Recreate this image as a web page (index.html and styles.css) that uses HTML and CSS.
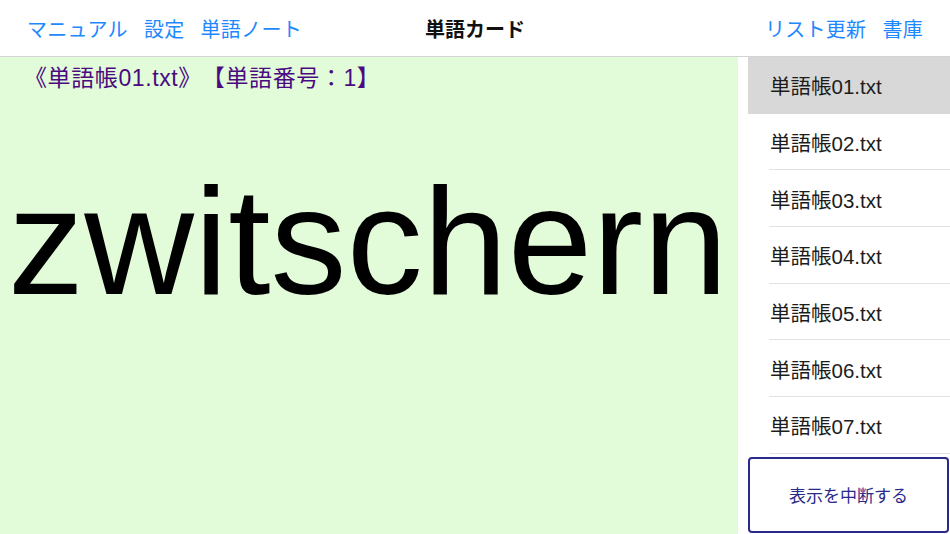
FILE: index.html
```html
<!DOCTYPE html>
<html lang="ja">
<head>
<meta charset="utf-8">
<title>単語カード</title>
<link rel="stylesheet" href="styles.css">
</head>
<body>
<div class="app">
  <header class="navbar">
    <div class="nav-left">
      <span class="nav-link">マニュアル</span>
      <span class="nav-link">設定</span>
      <span class="nav-link">単語ノート</span>
    </div>
    <div class="nav-title">単語カード</div>
    <div class="nav-right">
      <span class="nav-link">リスト更新</span>
      <span class="nav-link">書庫</span>
    </div>
  </header>
  <div class="content">
    <main class="card">
      <div class="info">《単語帳01.txt》【単語番号：1】</div>
      <div class="word">zwitschern</div>
    </main>
    <aside class="sidebar">
      <ul class="file-list">
        <li class="file selected">単語帳01.txt</li>
        <li class="file">単語帳02.txt</li>
        <li class="file">単語帳03.txt</li>
        <li class="file">単語帳04.txt</li>
        <li class="file">単語帳05.txt</li>
        <li class="file">単語帳06.txt</li>
        <li class="file">単語帳07.txt</li>
      </ul>
      <button class="stop-btn">表示を中断する</button>
    </aside>
  </div>
</div>
</body>
</html>
```
FILE: styles.css
```css
* { box-sizing: border-box; }
html, body {
  margin: 0;
  padding: 0;
  width: 950px;
  height: 534px;
  overflow: hidden;
  background: #ffffff;
  font-family: "Liberation Sans", "Noto Sans CJK JP", sans-serif;
}
.app {
  display: flex;
  flex-direction: column;
  height: 534px;
}
.navbar {
  height: 57px;
  flex: 0 0 57px;
  border-bottom: 1px solid #d4d4d4;
  display: grid;
  grid-template-columns: 1fr auto 1fr;
  align-items: center;
  padding: 0 27px 0 27px;
}
.nav-left, .nav-right {
  display: flex;
  gap: 16px;
  align-items: center;
}
.nav-right { justify-content: flex-end; }
.nav-link {
  color: #1e88ff;
  font-size: 20px;
  letter-spacing: 0.3px;
}
.nav-title {
  font-size: 20px;
  font-weight: bold;
  color: #111;
}
.content {
  flex: 1;
  display: flex;
  min-height: 0;
}
.card {
  width: 738px;
  background: #e2fcda;
  display: flex;
  flex-direction: column;
}
.info {
  color: #4b0a80;
  font-size: 23px;
  padding: 2px 0 0 24px;
  height: 44px;
  text-spacing-trim: space-all;
  letter-spacing: 0.6px;
}
.word {
  font-size: 152px;
  line-height: 1;
  text-align: center;
  color: #000;
  padding-top: 64px;
  padding-right: 2px;
  letter-spacing: 0.2px;
}
.sidebar {
  margin-left: 10px;
  flex: 1;
  display: flex;
  flex-direction: column;
}
.file-list {
  list-style: none;
  margin: 0;
  padding: 0;
}
.file {
  height: 56.67px;
  padding-left: 22px;
  display: flex;
  align-items: center;
  font-size: 20.5px;
  color: #1c1c1c;
  position: relative;
}
.file::after {
  content: "";
  position: absolute;
  left: 21px;
  right: 0;
  bottom: 0;
  height: 1px;
  background: #e2e2e2;
}
.file.selected { background: #d8d8d8; }
.file.selected::after { display: none; }
.stop-btn {
  margin-top: 3px;
  flex: 1;
  margin-bottom: 1px;
  margin-right: 1px;
  background: #fff;
  border: 2px solid #2a2a8c;
  border-radius: 4px;
  color: #2a2a8c;
  font-size: 17px;
  font-family: "Liberation Sans", "Noto Sans CJK JP", sans-serif;
  padding: 0;
}
```
